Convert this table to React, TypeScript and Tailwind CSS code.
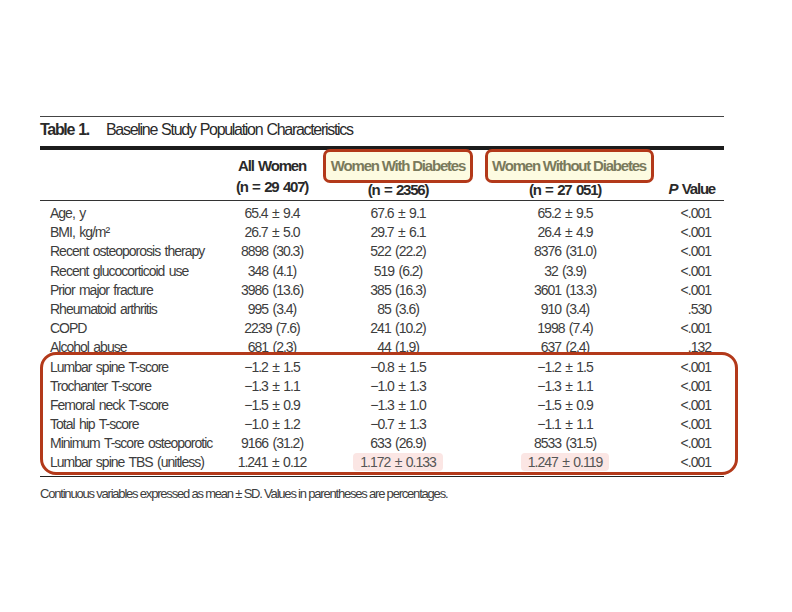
const rows: [string, string, string, string, string][] = [
  ["Age, y", "65.4 ± 9.4", "67.6 ± 9.1", "65.2 ± 9.5", "<.001"],
  ["BMI, kg/m²", "26.7 ± 5.0", "29.7 ± 6.1", "26.4 ± 4.9", "<.001"],
  ["Recent osteoporosis therapy", "8898 (30.3)", "522 (22.2)", "8376 (31.0)", "<.001"],
  ["Recent glucocorticoid use", "348 (4.1)", "519 (6.2)", "32 (3.9)", "<.001"],
  ["Prior major fracture", "3986 (13.6)", "385 (16.3)", "3601 (13.3)", "<.001"],
  ["Rheumatoid arthritis", "995 (3.4)", "85 (3.6)", "910 (3.4)", ".530"],
  ["COPD", "2239 (7.6)", "241 (10.2)", "1998 (7.4)", "<.001"],
  ["Alcohol abuse", "681 (2.3)", "44 (1.9)", "637 (2.4)", ".132"],
];

const boneRows: [string, string, string, string, string][] = [
  ["Lumbar spine T-score", "−1.2 ± 1.5", "−0.8 ± 1.5", "−1.2 ± 1.5", "<.001"],
  ["Trochanter T-score", "−1.3 ± 1.1", "−1.0 ± 1.3", "−1.3 ± 1.1", "<.001"],
  ["Femoral neck T-score", "−1.5 ± 0.9", "−1.3 ± 1.0", "−1.5 ± 0.9", "<.001"],
  ["Total hip T-score", "−1.0 ± 1.2", "−0.7 ± 1.3", "−1.1 ± 1.1", "<.001"],
  ["Minimum T-score osteoporotic", "9166 (31.2)", "633 (26.9)", "8533 (31.5)", "<.001"],
];

const cols = "grid grid-cols-[187px_90px_162px_172px_73px]";

function Row({ r, pink }: { r: [string, string, string, string, string]; pink?: boolean }) {
  const hl = pink ? "rounded-[4px] bg-[#fbe6e4] px-[7px] py-[1px] text-[#555]" : "";
  return (
    <div className={`${cols} h-[19.2px] items-center leading-[19.2px]`}>
      <span className="pl-[10px] whitespace-nowrap">{r[0]}</span>
      <span className="text-center whitespace-nowrap">{r[1]}</span>
      <span className="text-center whitespace-nowrap">
        <span className={hl}>{r[2]}</span>
      </span>
      <span className="text-center whitespace-nowrap">
        <span className={hl}>{r[3]}</span>
      </span>
      <span className="pr-[13px] text-right">{r[4]}</span>
    </div>
  );
}

function HeadBox({ label, w }: { label: string; w: string }) {
  return (
    <div
      className={`relative z-10 -mt-[1px] flex h-[34px] ${w} items-center justify-center whitespace-nowrap rounded-[7px] border-[3px] border-[#b3391a] bg-[#fdfbe1] font-bold text-[#7a7a5c] [word-spacing:0px]`}
    >
      {label}
    </div>
  );
}

export default function App() {
  return (
    <div className="min-h-[612px] bg-white pt-[116px] pl-[40px] font-['Liberation_Sans',Arial,sans-serif] text-[#3d3d3d]">
      <div className="w-[684px]">
        <div className="h-px bg-[#444]" />
        <div className="h-[29px] pt-[3px] text-[16px] leading-[20px] tracking-[-1.3px] [word-spacing:1px] text-[#2a2a2a]">
          <span className="font-bold">Table 1.</span>
          <span className="ml-[17px]">Baseline Study Population Characteristics</span>
        </div>
        <div className="h-[4px] bg-[#1c1c1c]" />

        <div className={`${cols} h-[50px] text-[15px] leading-[18px] tracking-[-1.2px] [word-spacing:1.5px] text-[#2a2a2a]`}>
          <div />
          <div className="flex flex-col items-center pt-[7px] font-bold whitespace-nowrap">
            <span>All Women</span>
            <span className="mt-[3px]">(n = 29 407)</span>
          </div>
          <div className="flex flex-col items-center">
            <HeadBox label="Women With Diabetes" w="w-[150px]" />
            <span className="-mt-[2px] font-bold whitespace-nowrap">(n = 2356)</span>
          </div>
          <div className="flex flex-col items-center">
            <HeadBox label="Women Without Diabetes" w="ml-[8px] w-[169px]" />
            <span className="-mt-[2px] font-bold whitespace-nowrap">(n = 27 051)</span>
          </div>
          <div className="flex items-end justify-end pr-[9px] pb-[2px] font-bold whitespace-nowrap">
            <span>
              <i>P</i> Value
            </span>
          </div>
        </div>
        <div className="h-px bg-[#333]" />

        <div className="pt-[3px] text-[14px] tracking-[-1px] [word-spacing:1.5px]">
          {rows.map((r) => (
            <Row key={r[0]} r={r} />
          ))}
          <div className="relative">
            {boneRows.map((r) => (
              <Row key={r[0]} r={r} />
            ))}
            <Row r={["Lumbar spine TBS (unitless)", "1.241 ± 0.12", "1.172 ± 0.133", "1.247 ± 0.119", "<.001"]} pink />
            <div className="pointer-events-none absolute -top-[6px] -bottom-[2px] left-0 -right-[14px] rounded-[16px] border-[3px] border-[#b3391a]" />
          </div>
        </div>
        <div className="mt-[3px] h-[1.5px] bg-[#222]" />

        <p className="mt-[9px] text-[13px] leading-[16px] tracking-[-1.2px] text-[#3d3d3d]">
          Continuous variables expressed as mean ± SD. Values in parentheses are percentages.
        </p>
      </div>
    </div>
  );
}
